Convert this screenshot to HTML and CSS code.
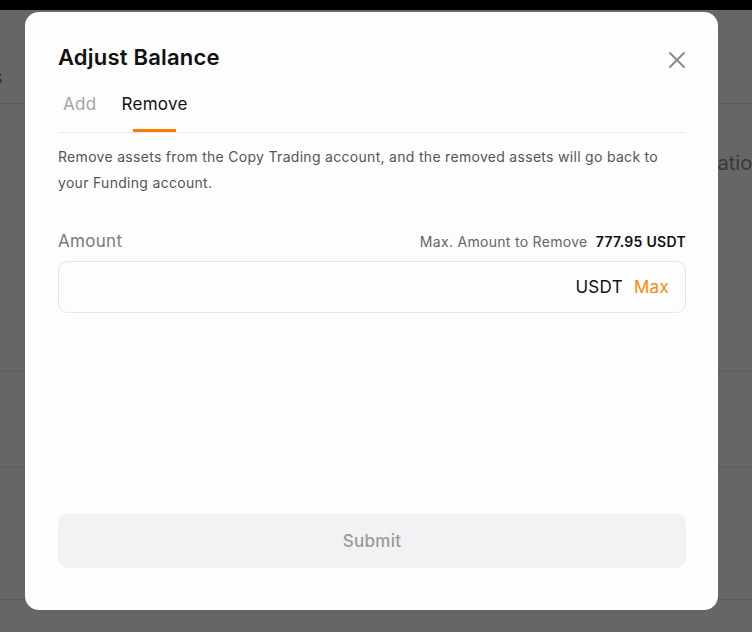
FILE: index.html
```html
<!DOCTYPE html>
<html lang="en">
<head>
<meta charset="utf-8">
<title>Adjust Balance</title>
<link rel="stylesheet" href="styles.css">
</head>
<body>
<div class="page">
  <div class="topbar"></div>
  <div class="page-tabs">
    <span class="page-tab">Positions</span>
  </div>
  <div class="page-row">
    <span class="page-side">Allocation</span>
  </div>
  <div class="page-row tall"></div>
  <div class="page-row mid"></div>
  <div class="page-row short"></div>
</div>

<div class="overlay">
  <div class="modal">
    <div class="modal-head">
      <h2 class="modal-title">Adjust Balance</h2>
      <button class="close" aria-label="Close">
        <svg width="18" height="18" viewBox="0 0 18 18"><path d="M2 2 L16 16 M16 2 L2 16" stroke="#8a8a8a" stroke-width="2" stroke-linecap="round" fill="none"/></svg>
      </button>
    </div>
    <div class="tabs">
      <span class="tab">Add</span>
      <span class="tab active">Remove</span>
    </div>
    <p class="desc">Remove assets from the Copy Trading account, and the removed assets will go back to your Funding account.</p>
    <div class="field-head">
      <span class="field-label">Amount</span>
      <span class="field-max">Max. Amount to Remove <b>777.95 USDT</b></span>
    </div>
    <div class="input">
      <span class="unit">USDT</span>
      <span class="max-link">Max</span>
    </div>
    <div class="spacer"></div>
    <button class="submit">Submit</button>
  </div>
</div>
</body>
</html>
```

FILE: styles.css
```css
* { box-sizing: border-box; }

html, body {
  margin: 0;
  height: 100%;
  overflow: hidden;
  font-family: Inter, "Noto Sans", sans-serif;
}

/* page underneath the dialog */
.page {
  background: #fff;
  height: 100%;
  display: flex;
  flex-direction: column;
}
.topbar { height: 10px; background: #000; }
.page-tabs {
  height: 94px;
  border-bottom: 1px solid #e8e8e8;
  display: flex;
  align-items: flex-end;
  padding-bottom: 14px;
}
.page-tab {
  font-size: 20px;
  line-height: 24px;
  color: #888;
  margin-left: -83px;
}
.page-row {
  height: 268px;
  border-bottom: 1px solid #e8e8e8;
  display: flex;
  justify-content: flex-end;
  align-items: flex-start;
}
.page-side {
  font-size: 20px;
  color: #8c8c8c;
  margin-top: 47px;
  margin-right: -12px;
}
.page-row.tall { height: 96px; }
.page-row.mid { height: 132px; }
.page-row.short { flex: 1; border-bottom: 0; }

/* dim layer with the dialog on top */
.overlay {
  position: fixed;
  inset: 0;
  background: rgba(0, 0, 0, 0.6);
  padding: 12px 34px 22px 25px;
  display: flex;
}
.modal {
  flex: 1;
  background: #fdfdfd;
  border-radius: 14px;
  padding: 28px 32px 42px 33px;
  display: flex;
  flex-direction: column;
  letter-spacing: 0.3px;
}
.modal-head {
  display: flex;
  justify-content: space-between;
  align-items: center;
}
.modal-title {
  margin: 0;
  font-size: 22px;
  font-weight: 600;
  color: #111;
  letter-spacing: 0.2px;
  line-height: 34px;
}
.close {
  border: 0;
  background: none;
  padding: 0;
  width: 18px;
  height: 18px;
  margin-top: 6px;
  display: flex;
}

.tabs {
  display: flex;
  gap: 25px;
  border-bottom: 1px solid #ececec;
  margin-top: 19px;
  padding-left: 5px;
}
.tab {
  font-size: 17px;
  color: #a3a3a3;
  padding-bottom: 17px;
  line-height: 22px;
  position: relative;
}
.tab.active { color: #111; }
.tab.active::after {
  content: "";
  position: absolute;
  left: 12px;
  right: 12px;
  bottom: 0;
  height: 3px;
  background: #ff7a00;
}

.desc {
  margin: 11px 0 0;
  font-size: 14px;
  line-height: 26px;
  color: #555;
}

.field-head {
  display: flex;
  justify-content: space-between;
  align-items: baseline;
  margin-top: 35px;
}
.field-label { font-size: 17px; color: #7a7a7a; }
.field-max { font-size: 14px; color: #666; }
.field-max b { color: #111; font-weight: 600; margin-left: 4px; }

.input {
  margin-top: 10px;
  height: 52px;
  border: 1px solid #e6e6e6;
  border-radius: 10px;
  display: flex;
  justify-content: flex-end;
  align-items: center;
  gap: 11px;
  padding-right: 16px;
  font-size: 17px;
}
.unit { color: #111; }
.max-link { color: #ff8a00; }

.spacer { flex: 1; }

.submit {
  height: 54px;
  border: 0;
  border-radius: 10px;
  background: #f1f2f4;
  color: #9a9a9a;
  font-family: inherit;
  font-size: 17px;
  font-weight: 500;
  letter-spacing: 0.3px;
}
```
